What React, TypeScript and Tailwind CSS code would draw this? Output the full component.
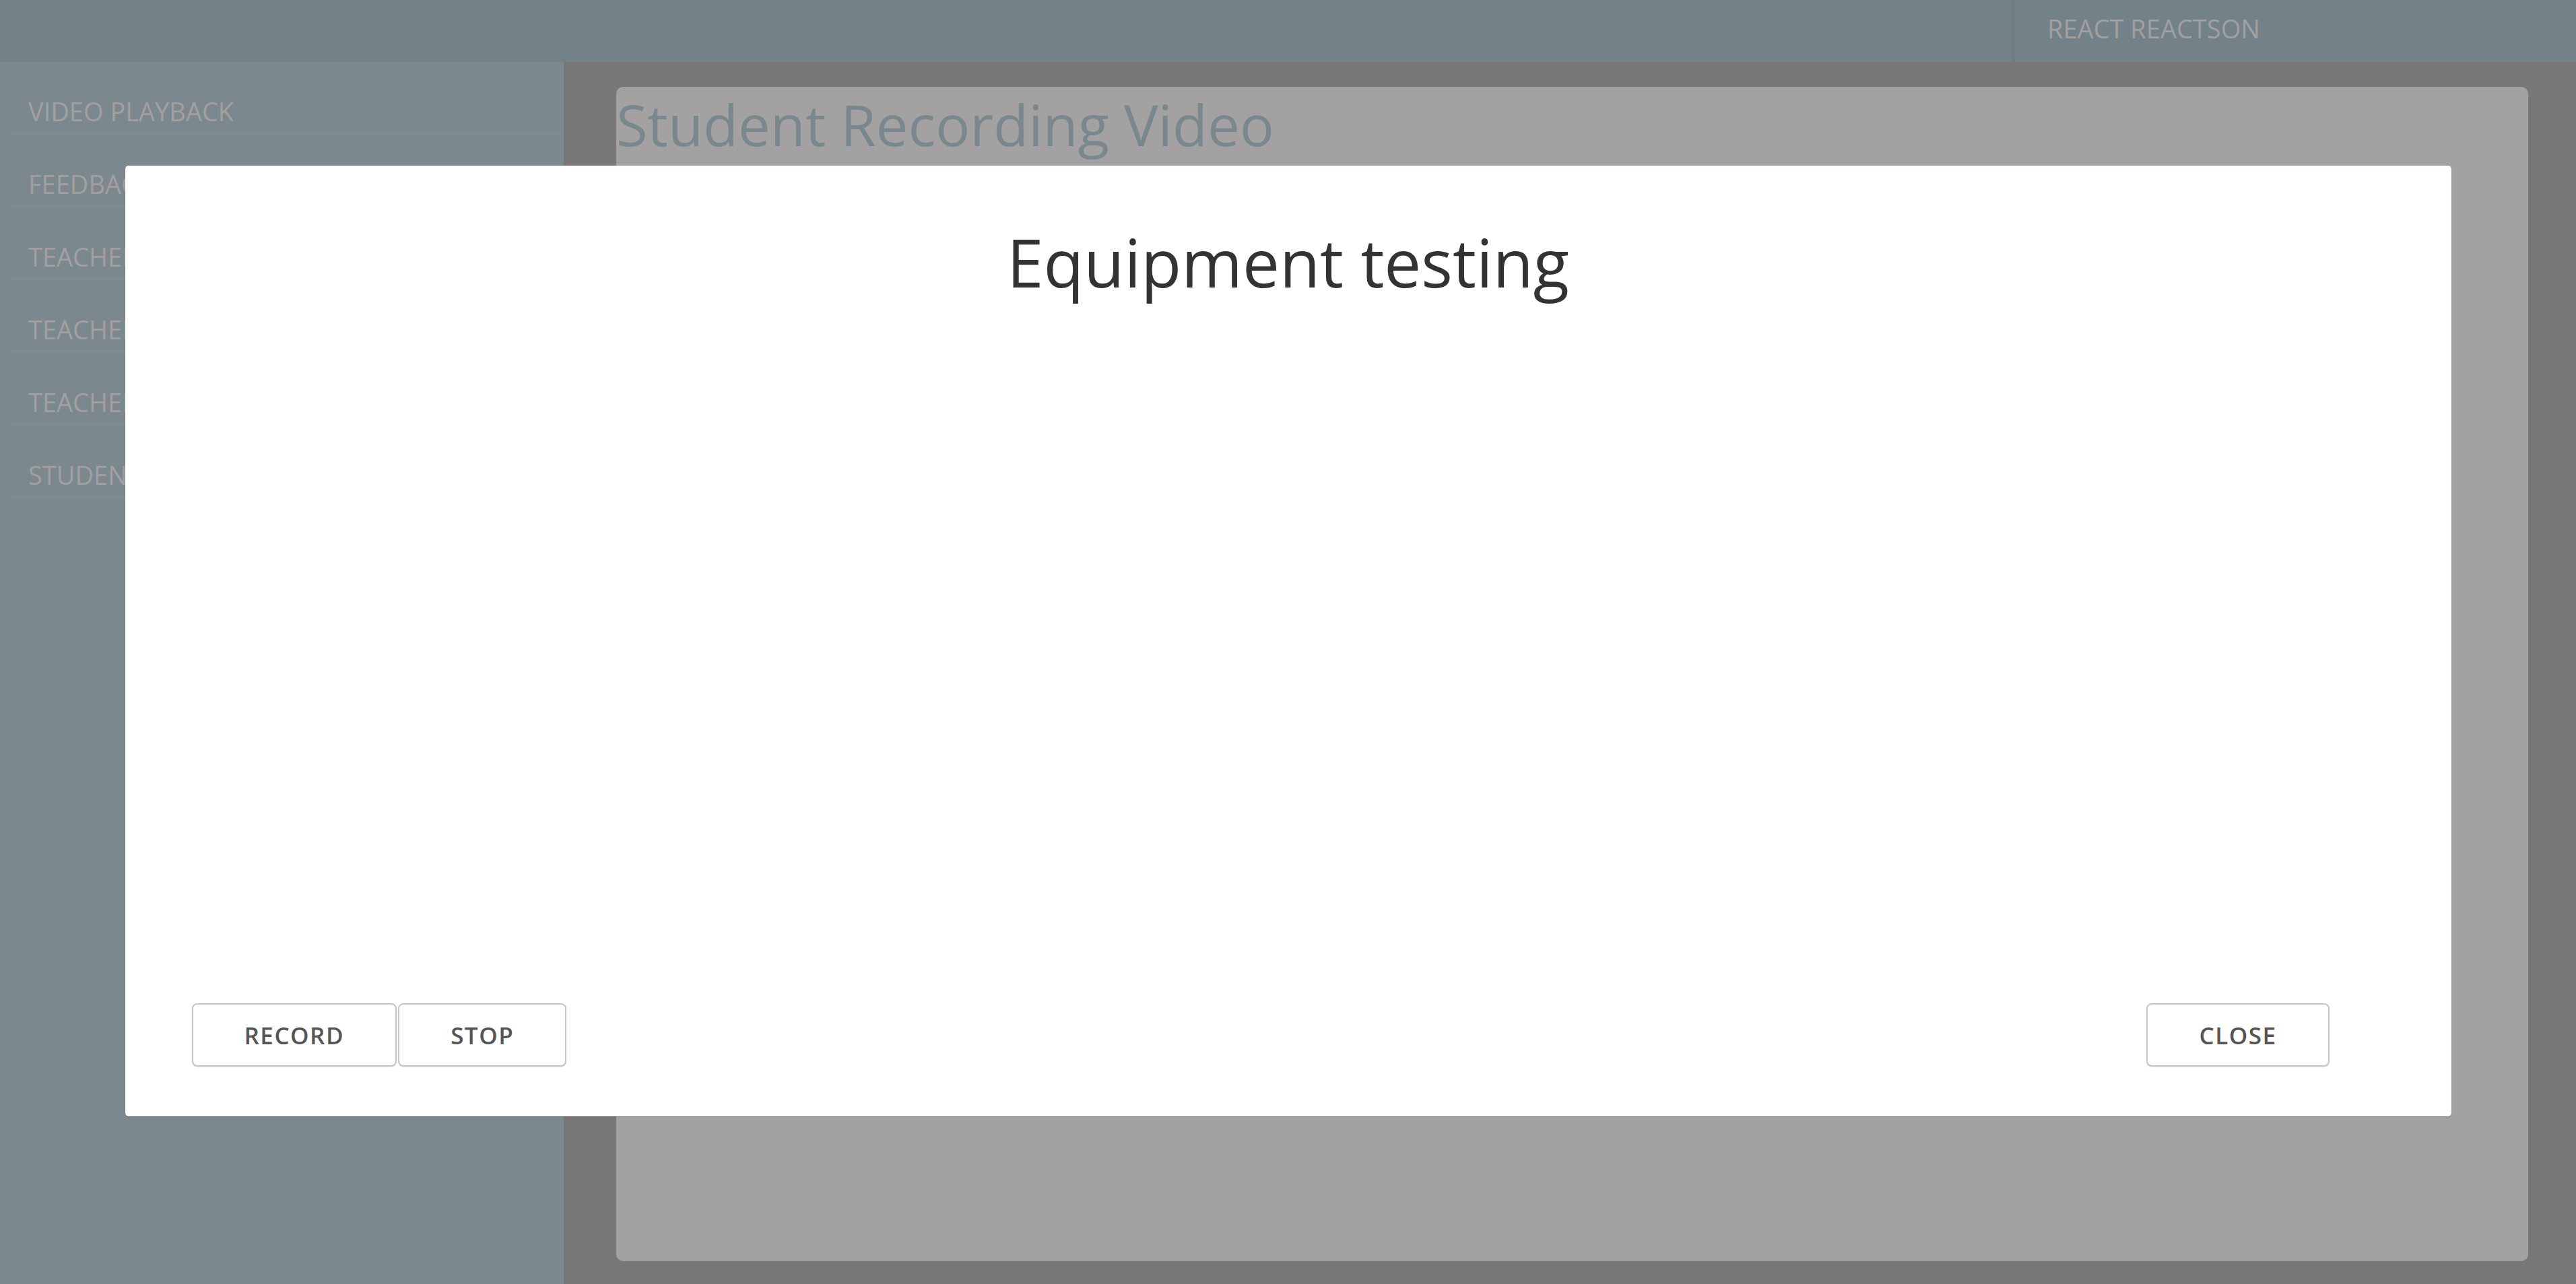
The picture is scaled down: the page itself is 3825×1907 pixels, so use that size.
import React from "react";

const navItems = [
  "VIDEO PLAYBACK",
  "FEEDBACK",
  "TEACHER LIST",
  "TEACHER REVIEW",
  "TEACHER NOTES",
  "STUDENT LIST",
];

function ModalButton({ label }: { label: string }) {
  return (
    <button
      type="button"
      className="h-[94px] px-[76px] flex items-center justify-center bg-white border-2 border-[#c6c6c6] rounded-[8px] shadow-[0_1px_1px_rgba(0,0,0,0.12)] text-[35px] leading-none tracking-[1.5px] font-semibold text-[#555555] font-['Open_Sans',sans-serif]"
    >
      {label}
    </button>
  );
}

export default function App() {
  return (
    <div className="relative w-full h-[1907px] flex flex-col overflow-hidden font-['Open_Sans',sans-serif]">
      {/* Header */}
      <header className="h-[92px] shrink-0 flex bg-[#728288]">
        <div className="flex-1" />
        <div className="w-[838px] border-l-[5px] border-[#6c7f85] pl-[48px] pt-[23px]">
          <span className="text-[38px] leading-none text-[#a29fa1]">REACT REACTSON</span>
        </div>
      </header>

      <div className="flex-1 flex min-h-0">
        {/* Sidebar */}
        <aside className="w-[837px] shrink-0 bg-[#7b898e] pl-[17px] pr-[5px]">
          {navItems.map((item) => (
            <div
              key={item}
              className="pt-[54px] pb-[12px] pl-[25px] border-b-4 border-[#808e93] text-[38px] leading-none text-[#a29fa1] whitespace-nowrap overflow-hidden"
            >
              {item}
            </div>
          ))}
        </aside>

        {/* Content */}
        <main className="flex-1 bg-[#787677] pl-[78px] pr-[71px] pt-[37px] pb-[34px] flex">
          <section className="flex-1 bg-[#a3a1a2] rounded-[10px]">
            <h1 className="mt-[13px] text-[85px] leading-none text-[#7a888d] font-normal">
              Student Recording Video
            </h1>
          </section>
        </main>
      </div>

      {/* Modal overlay */}
      <div className="absolute inset-0 flex items-center justify-center pb-[3px]">
        <div className="w-[3454px] h-[1412px] bg-white rounded-[5px] shadow-[0_1px_2px_rgba(0,0,0,0.2)] flex flex-col">
          <h2 className="pt-[94px] text-center text-[98px] leading-none text-[#333333] font-normal">
            Equipment testing
          </h2>
          <div className="flex-1" />
          <div className="flex items-center justify-between pl-[99px] pr-[181px] pb-[74px]">
            <div className="flex gap-[2px]">
              <ModalButton label="RECORD" />
              <ModalButton label="STOP" />
            </div>
            <ModalButton label="CLOSE" />
          </div>
        </div>
      </div>
    </div>
  );
}
